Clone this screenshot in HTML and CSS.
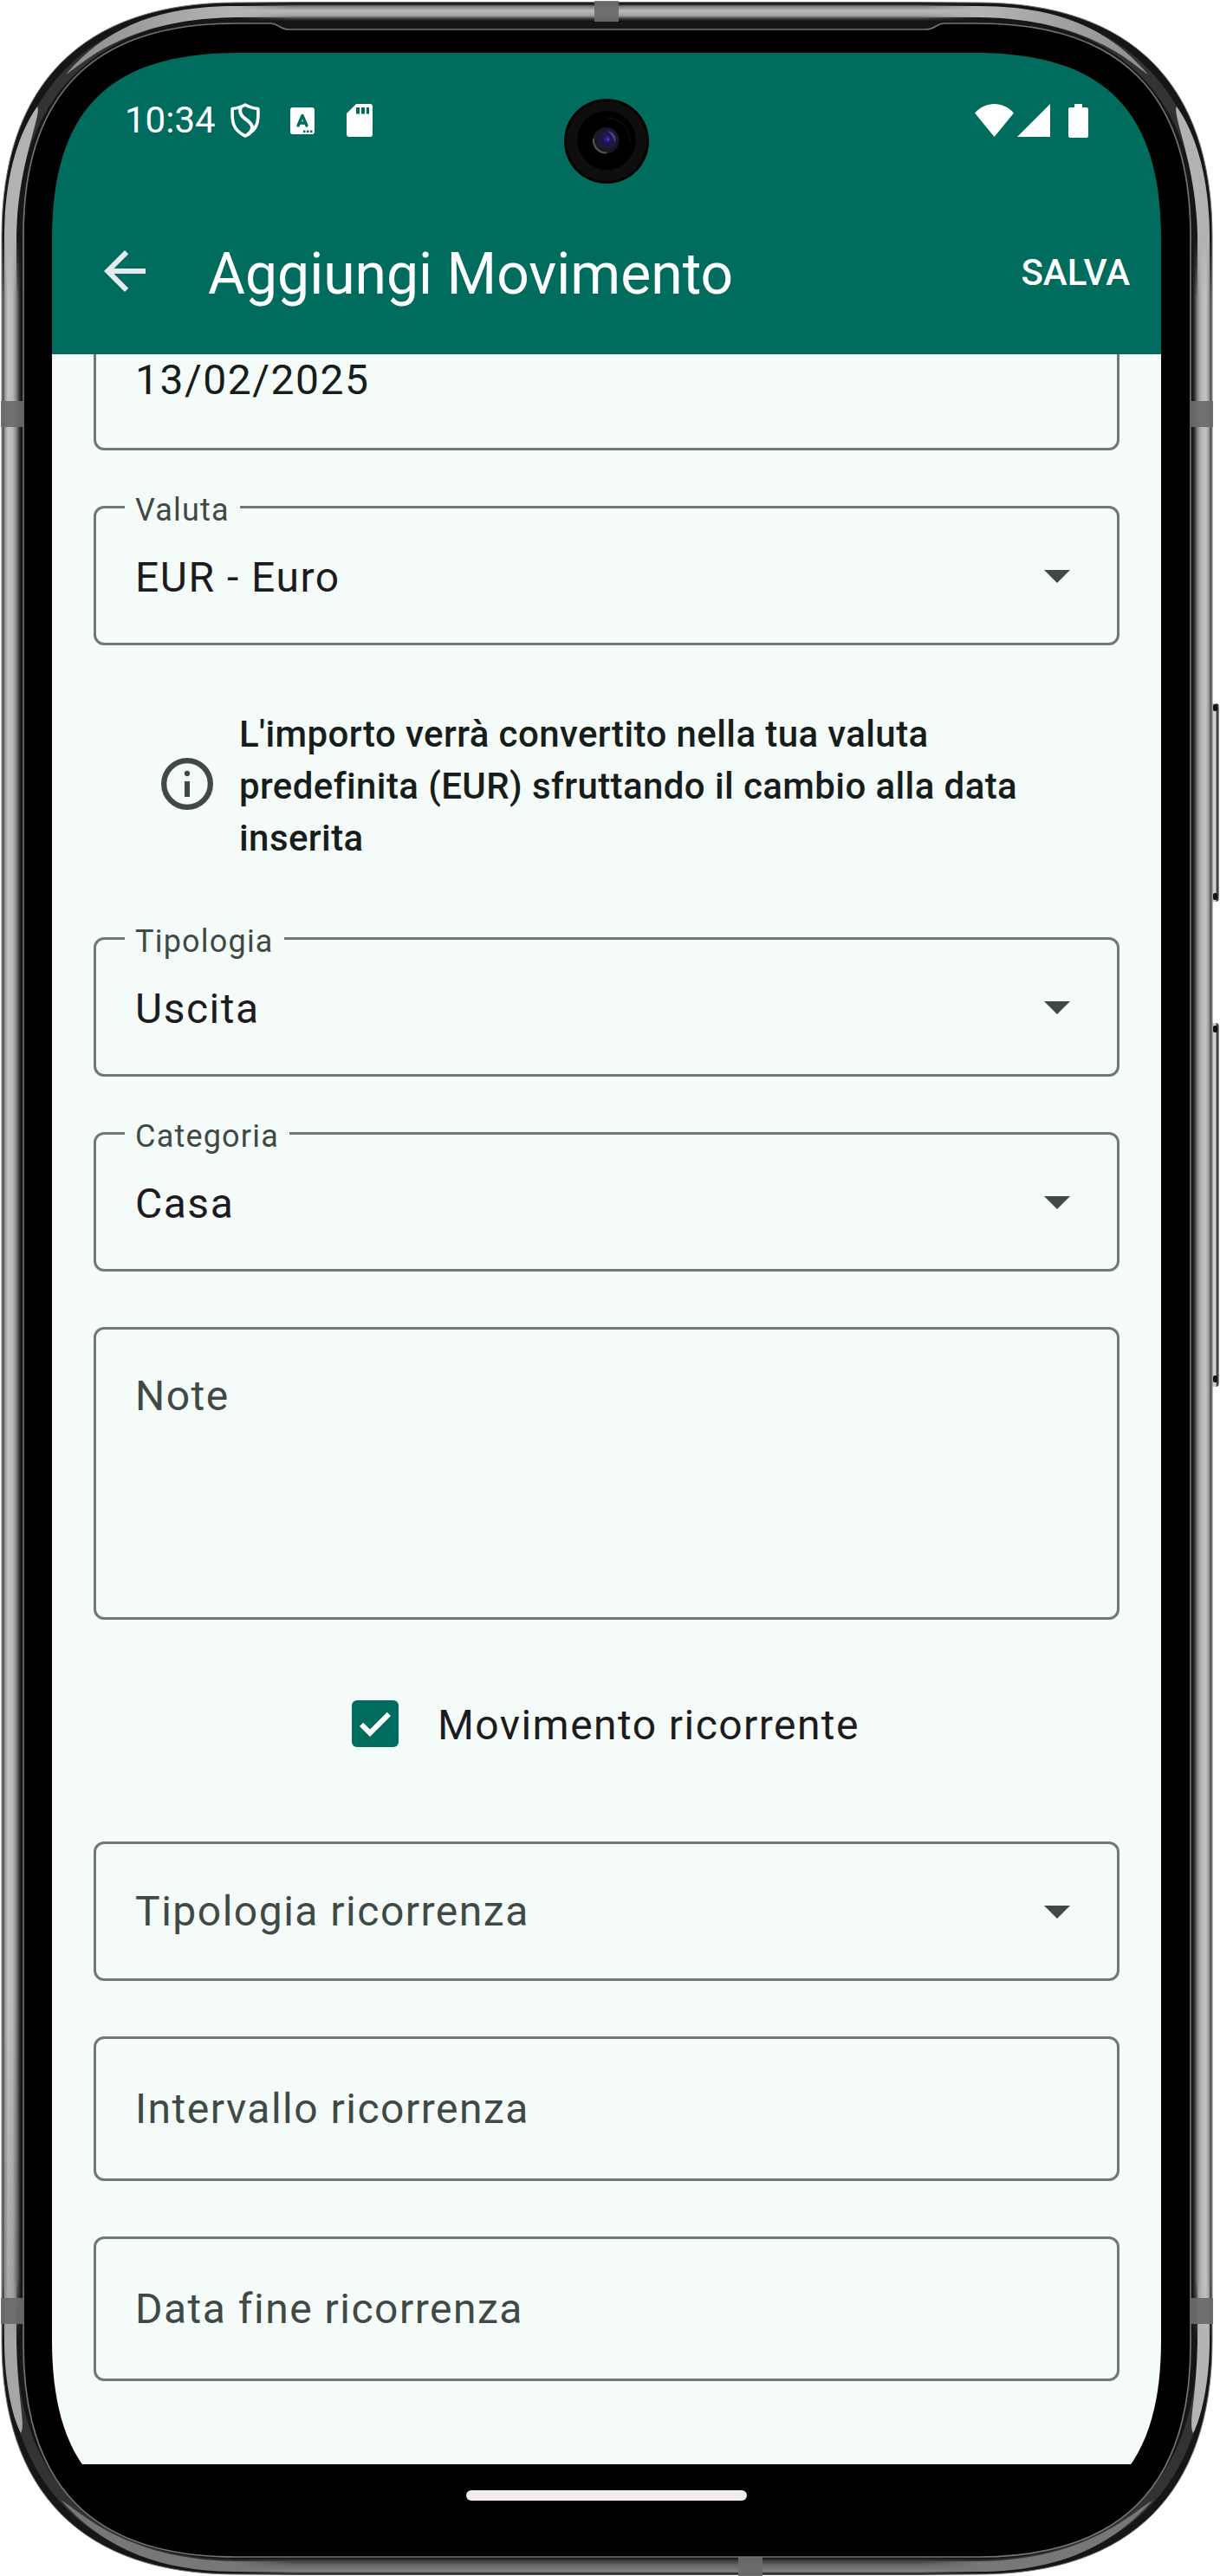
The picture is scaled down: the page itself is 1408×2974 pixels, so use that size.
FILE: index.html
```html
<!DOCTYPE html>
<html lang="it">
<head>
<meta charset="utf-8">
<title>Aggiungi Movimento</title>
<link rel="stylesheet" href="styles.css">
</head>
<body>
<div class="device">
  <svg class="device-frame" viewBox="0 0 1408 2974" aria-hidden="true">
    <defs>
      <linearGradient id="sideLeft" x1="0" x2="1" y1="0" y2="0">
        <stop offset="0" stop-color="#8a8a8a"/><stop offset=".07" stop-color="#4c4c4c"/><stop offset=".16" stop-color="#999"/>
        <stop offset=".3" stop-color="#c4c4c4"/><stop offset=".55" stop-color="#b4b4b4"/><stop offset=".72" stop-color="#7c7c7c"/>
        <stop offset=".85" stop-color="#333"/><stop offset="1" stop-color="#050505"/>
      </linearGradient>
      <linearGradient id="topEdge" x1="0" x2="0" y1="0" y2="1">
        <stop offset="0" stop-color="#777"/><stop offset=".1" stop-color="#050505"/><stop offset=".22" stop-color="#777"/>
        <stop offset=".45" stop-color="#bababa"/><stop offset=".7" stop-color="#a0a0a0"/><stop offset=".85" stop-color="#3e3e3e"/><stop offset="1" stop-color="#0a0a0a"/>
      </linearGradient>
      <linearGradient id="bottomEdge" x1="0" x2="0" y1="0" y2="1">
        <stop offset="0" stop-color="#050505"/><stop offset=".2" stop-color="#3c3c3c"/><stop offset=".45" stop-color="#666"/>
        <stop offset=".8" stop-color="#808080"/><stop offset=".93" stop-color="#222"/><stop offset="1" stop-color="#777"/>
      </linearGradient>
      <linearGradient id="fadeVertical" gradientUnits="userSpaceOnUse" x1="0" x2="0" y1="272" y2="2703">
        <stop offset="0" stop-color="#000"/><stop offset=".03" stop-color="#fff"/><stop offset=".97" stop-color="#fff"/><stop offset="1" stop-color="#000"/>
      </linearGradient>
      <linearGradient id="fadeHorizontal" gradientUnits="userSpaceOnUse" x1="271" x2="1130" y1="0" y2="0">
        <stop offset="0" stop-color="#000"/><stop offset=".08" stop-color="#fff"/><stop offset=".92" stop-color="#fff"/><stop offset="1" stop-color="#000"/>
      </linearGradient>
      <mask id="maskVertical" maskUnits="userSpaceOnUse" x="0" y="0" width="1408" height="2974"><rect width="1408" height="2974" fill="url(#fadeVertical)"/></mask>
      <mask id="maskHorizontal" maskUnits="userSpaceOnUse" x="0" y="0" width="1408" height="2974"><rect width="1408" height="2974" fill="url(#fadeHorizontal)"/></mask>
      <linearGradient id="shadeUp" x1="0" x2="0" y1="0" y2="1">
        <stop offset="0" stop-color="#000" stop-opacity="0"/><stop offset="1" stop-color="#000" stop-opacity=".15"/>
      </linearGradient>
      <linearGradient id="key" x1="0" x2="1" y1="0" y2="0">
        <stop offset="0" stop-color="#555"/><stop offset=".25" stop-color="#c8c8c8"/><stop offset=".6" stop-color="#d4d4d4"/>
        <stop offset=".82" stop-color="#222"/><stop offset="1" stop-color="#aaa"/>
      </linearGradient>
      <linearGradient id="glowTop" gradientUnits="userSpaceOnUse" x1="76" x2="272" y1="0" y2="0">
        <stop offset="0" stop-color="#8e8e8e"/><stop offset="1" stop-color="#b4b4b4"/>
      </linearGradient>
      <radialGradient id="lens" cx=".55" cy=".45" r=".55">
        <stop offset="0" stop-color="#40249c"/><stop offset=".3" stop-color="#1d1450"/><stop offset=".6" stop-color="#191b38"/><stop offset=".85" stop-color="#15161c"/><stop offset="1" stop-color="#363234"/>
      </radialGradient>
    </defs>

    <rect x="1396" y="812" width="11" height="229" rx="4" fill="url(#key)"/>
    <rect x="1400" y="813" width="5" height="8" rx="2" fill="#111"/>
    <rect x="1400" y="1031" width="5" height="8" rx="2" fill="#111"/>
    <rect x="1396" y="1181" width="11" height="420" rx="4" fill="url(#key)"/>
    <rect x="1400" y="1184" width="5" height="8" rx="2" fill="#111"/>
    <rect x="1400" y="1588" width="5" height="8" rx="2" fill="#111"/>

    <path d="M2 273C2 97 96 3 272 3H1129C1305 3 1399 97 1399 273V2702C1399 2878 1305 2972 1129 2972H272C96 2972 2 2878 2 2702Z" fill="#161616" stroke="#777" stroke-width="1"/>
    <path d="M13 273C13 110 109 14 272 14H1129C1292 14 1388 110 1388 273V2702C1388 2865 1292 2961 1129 2961H272C109 2961 13 2865 13 2702Z" fill="none" stroke="#333" stroke-width="12"/>

    <g id="cornerGlow">
      <path d="M360 7H272C180 7 121 33 76 86C90 79 140 21 272 20H360Z" fill="url(#glowTop)"/>
      <path d="M5 360V273C5 210 19 157 43 123C49 132 20 190 19 273V360Z" fill="#b2b2b2"/>
    </g>
    <use href="#cornerGlow" transform="translate(1401) scale(-1 1)"/>
    <path d="M360 2969H272C180 2969 117 2939 71 2887C85 2892 140 2956 272 2957H360Z" fill="#777"/>
    <path d="M5 2620V2702C5 2745 13 2788 24 2809C30 2798 20 2770 19 2702V2620Z" fill="#a6a6a6"/>
    <path d="M1040 2969H1129C1221 2969 1284 2939 1330 2887C1316 2892 1261 2956 1129 2957H1040Z" fill="#777"/>
    <path d="M1396 2620V2702C1396 2745 1388 2788 1377 2809C1371 2798 1381 2770 1382 2702V2620Z" fill="#b4b4b4"/>

    <g mask="url(#maskVertical)">
      <rect x="2" y="272" width="24" height="2431" fill="url(#sideLeft)"/>
      <rect x="2" y="272" width="24" height="2431" fill="url(#sideLeft)" transform="translate(1401) scale(-1 1)"/>
      <rect x="6" y="2303" width="14" height="400" fill="url(#shadeUp)"/>
    </g>
    <g mask="url(#maskHorizontal)">
      <rect x="271" y="2" width="859" height="23" fill="url(#topEdge)"/>
      <rect x="271" y="2952" width="859" height="21" fill="url(#bottomEdge)"/>
    </g>

    <g fill="#6a6c6a" opacity=".94">
      <rect x="686" y="1" width="28" height="24"/>
      <rect x="852" y="2952" width="28" height="22"/>
      <rect x="1" y="463" width="25" height="30"/>
      <rect x="1375" y="463" width="25" height="30"/>
      <rect x="1" y="2653" width="25" height="30"/>
      <rect x="1375" y="2653" width="25" height="30"/>
    </g>

    <path d="M27 272C27 108 108 27 272 27H312C322 27 322 34 334 34H1068C1080 34 1080 27 1090 27H1129C1293 27 1374 108 1374 272V2707C1374 2871 1293 2952 1129 2952H272C108 2952 27 2871 27 2707Z" fill="#000" stroke="#737373" stroke-width="1.7"/>
  </svg>

  <main class="screen">
    <header class="top">
      <div class="status-bar">
        <div class="status-left">
          <span class="clock">10:34</span>
          <svg class="ic-shield" viewBox="0 0 34 40"><path d="M17 2C12 5 7 6 2.200 6.500C1.500 20 2 31 17 38C32 31 32.500 20 31.800 6.500C27 6 22 5 17 2Z" fill="none" stroke="#fff" stroke-width="3.600" stroke-linejoin="round"/><path d="M12 4C7 18 25 19 25 28C25 31 23 34 20 36" fill="none" stroke="#fff" stroke-width="4"/></svg>
          <svg class="ic-keyboard" viewBox="0 0 28 31"><rect width="28" height="31" rx="3" fill="#fff"/><path d="M9 21L14 9.500L19 21M10.500 18H17.500" fill="none" stroke="#006c5e" stroke-width="3.400" stroke-linecap="round" stroke-linejoin="round"/><path d="M15 26.500h2.500v2.400H15zM19 26.500h2.500v2.400H19zM23 26.500h2.500v2.400H23z" fill="#006c5e"/></svg>
          <svg class="ic-sd" viewBox="0 0 30 38"><path d="M11 0H27Q30 0 30 3V35Q30 38 27 38H3Q0 38 0 35V11ZM11 4V11.500H15V4ZM17 4V11.500H21V4ZM22.800 4V11.500H26V4Z" fill="#fff" fill-rule="evenodd"/></svg>
        </div>
        <div class="status-right">
          <svg class="ic-wifi" viewBox="0 0 45 38"><path d="M22.500 38L0 10.500C12-3.500 33-3.500 45 10.500Z" fill="#fff"/></svg>
          <svg class="ic-signal" viewBox="0 0 38 38"><path d="M38 0V38H0Z" fill="#fff"/></svg>
          <svg class="ic-battery" viewBox="0 0 23 39"><path d="M7 0H16V4H21Q23 4 23 6V37Q23 39 21 39H2Q0 39 0 37V6Q0 4 2 4H7Z" fill="#fff"/></svg>
        </div>
      </div>
      <div class="app-bar">
        <svg class="icon back" viewBox="0 0 24 24"><path d="M20 11H7.830l5.590-5.590L12 4l-8 8 8 8 1.410-1.410L7.830 13H20z" fill="#e6e9ed"/></svg>
        <h1 class="title">Aggiungi Movimento</h1>
        <span class="save">SALVA</span>
      </div>
    </header>

    <form class="form">
      <div class="field tall date"><span class="value">13/02/2025</span></div>
      <div class="field selected">
        <span class="label">Valuta</span><span class="value">EUR - Euro</span>
        <svg class="icon" viewBox="0 0 24 24"><path d="M7 10l5 5 5-5z" fill="#3f4946"/></svg>
      </div>
      <div class="info">
        <svg class="icon" viewBox="0 0 24 24"><circle cx="12" cy="12" r="8.950" fill="none" stroke="#3f4946" stroke-width="2.100"/><circle cx="12" cy="8" r="1.050" fill="#3f4946"/><path d="M11 11h2v6h-2z" fill="#3f4946"/></svg>
        <p>L'importo verrà convertito nella tua valuta<br>predefinita (EUR) sfruttando il cambio alla data<br>inserita</p>
      </div>
      <div class="field selected">
        <span class="label">Tipologia</span><span class="value">Uscita</span>
        <svg class="icon" viewBox="0 0 24 24"><path d="M7 10l5 5 5-5z" fill="#3f4946"/></svg>
      </div>
      <div class="field selected">
        <span class="label">Categoria</span><span class="value">Casa</span>
        <svg class="icon" viewBox="0 0 24 24"><path d="M7 10l5 5 5-5z" fill="#3f4946"/></svg>
      </div>
      <div class="field notes"><span class="hint">Note</span></div>
      <div class="recurring">
        <svg class="checkbox" viewBox="7 7 18 18"><rect x="7" y="7" width="18" height="18" rx="2" fill="#006c5e"/><path d="M14 18.200L11.400 15.600 10 17l4 4 8-8-1.400-1.400z" fill="#fff"/></svg>
        <span>Movimento ricorrente</span>
      </div>
      <div class="field">
        <span class="hint">Tipologia ricorrenza</span>
        <svg class="icon" viewBox="0 0 24 24"><path d="M7 10l5 5 5-5z" fill="#3f4946"/></svg>
      </div>
      <div class="field tall"><span class="hint">Intervallo ricorrenza</span></div>
      <div class="field tall"><span class="hint">Data fine ricorrenza</span></div>
    </form>

    <nav class="nav-bar"><span class="handle"></span></nav>
  </main>

  <svg class="camera" viewBox="0 0 98 98" aria-hidden="true">
    <circle cx="49" cy="49" r="49" fill="#000"/>
    <circle cx="49" cy="49" r="46" fill="#0e0e0e"/>
    <circle cx="49" cy="48" r="34" fill="#000"/>
    <path d="M49 22A27 27 0 0 1 76 49" fill="none" stroke="#0a0a0d" stroke-width="2"/>
    <circle cx="48.500" cy="48" r="15" fill="url(#lens)"/>
    <path d="M34 46A14.500 14.500 0 0 0 49 62.500" fill="none" stroke="#555" stroke-width="2"/>
    <path d="M50 37Q61 39 59 51Q56 42 50 37Z" fill="#8a5aa8" opacity=".6"/>
    <circle cx="51" cy="47" r="1.500" fill="#5b33dd"/>
  </svg>
</div>
</body>
</html>
```
FILE: styles.css
```css
* { box-sizing: border-box; }

body {
  margin: 0;
  background: #fff;
  font-family: Roboto, "Liberation Sans", sans-serif;
}

.device {
  position: relative;
  width: 1408px;
  height: 2974px;
  padding: 61px 68px 57px 60px;
  overflow: hidden;
}

.device-frame {
  position: absolute;
  inset: 0;
  width: 1408px;
  height: 2974px;
}

.screen {
  position: relative;
  display: flex;
  flex-direction: column;
  width: 1280px;
  height: 2856px;
  clip-path: path("M0 215C0 66 66 0 215 0H1065C1214 0 1280 66 1280 215V2641C1280 2790 1214 2856 1065 2856H215C66 2856 0 2790 0 2641Z");
}

.camera {
  position: absolute;
  left: 651px;
  top: 114px;
  width: 98px;
  height: 98px;
}

.top { background: #006c5e; color: #fff; }

.status-bar {
  display: flex;
  justify-content: space-between;
  align-items: center;
  height: 156px;
  padding: 0 84px;
}

.status-left, .status-right { display: flex; align-items: center; }
.clock { width: 122px; font-size: 42px; line-height: 60px; }
.ic-shield { width: 34px; height: 40px; margin-right: 35px; }
.ic-keyboard { width: 28px; height: 31px; margin-right: 37px; }
.ic-sd { width: 30px; height: 38px; }
.ic-wifi { width: 45px; height: 38px; margin-right: 4px; }
.ic-signal { width: 38px; height: 38px; margin-right: 21px; }
.ic-battery { width: 23px; height: 39px; }

.icon { flex: none; width: 72px; height: 72px; }

.app-bar {
  display: flex;
  align-items: center;
  height: 192px;
  padding: 0 36px 0 48px;
}

.title {
  flex: 1;
  margin: 0;
  padding: 7px 0 0 60px;
  font-size: 66px;
  font-weight: 400;
  line-height: 84px;
  white-space: nowrap;
}

.save { padding-top: 3px; font-size: 42px; font-weight: 500; line-height: 60px; }

.form {
  flex: 1;
  min-height: 0;
  padding: 0 48px;
  overflow: hidden;
  background: #f4fbf8;
  color: #171d1b;
  font-size: 48px;
  letter-spacing: 1.5px;
}

.field {
  position: relative;
  display: flex;
  align-items: center;
  justify-content: space-between;
  height: 161px;
  margin-bottom: 64px;
  padding: 0 33px 0 45px;
  border: 3px solid #6f7976;
  border-radius: 12px;
  line-height: 64px;
}

.field .icon { margin-bottom: 2px; }
.field.tall { height: 167px; }
.field.date { margin-top: -56px; }
.field.date .value { padding-top: 5px; }
.selected .value { padding-top: 4px; color: #1d1b20; }
.hint { color: #3f4946; }

.label {
  position: absolute;
  top: -22px;
  left: 33px;
  padding: 0 12px;
  background: #f4fbf8;
  color: #3f4946;
  font-size: 36px;
  line-height: 48px;
  letter-spacing: 1.2px;
}

.info {
  display: flex;
  align-items: center;
  gap: 24px;
  margin: 73px 0 84px;
  padding-left: 72px;
  font-size: 42px;
  font-weight: 500;
  line-height: 60px;
  letter-spacing: .4px;
}
.info p { margin: 0; white-space: nowrap; }
.info .icon { margin-bottom: 6px; }

.field.notes { align-items: flex-start; height: 338px; margin-bottom: 93px; padding-top: 45px; }

.recurring {
  display: flex;
  align-items: center;
  gap: 45px;
  height: 54px;
  margin-bottom: 109px;
  padding-left: 298px;
  color: #1d1b20;
  line-height: 54px;
}
.recurring span { padding-top: 3px; letter-spacing: 1.44px; }
.checkbox { flex: none; width: 54px; height: 54px; }

.nav-bar {
  display: flex;
  align-items: center;
  justify-content: center;
  height: 72px;
  background: #000;
}
.handle { width: 324px; height: 12px; border-radius: 6px; background: #f2eced; }
```
